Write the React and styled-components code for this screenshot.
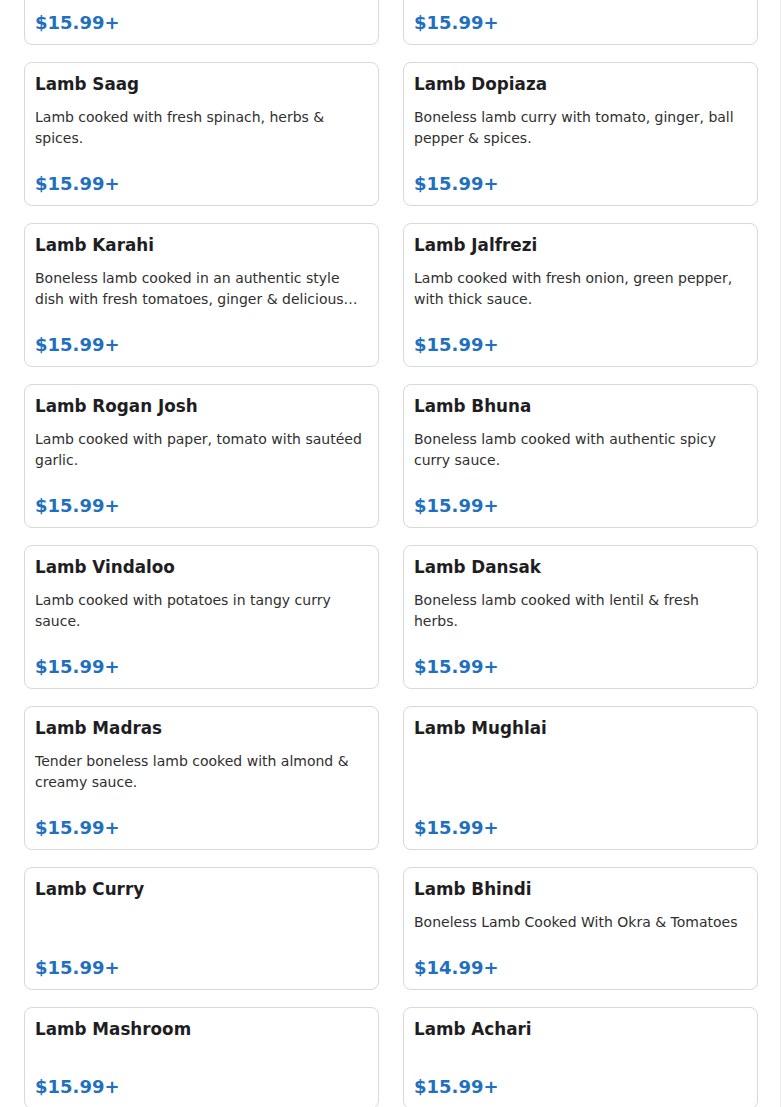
import React from "react";
import styled, { createGlobalStyle } from "styled-components";

const items = [
  { name: "Lamb Korma", desc: "Boneless lamb cooked with cream, cashew & mild spices.", price: "$15.99+" },
  { name: "Lamb Tikka Masala", desc: "Tender lamb cooked in a creamy tomato sauce.", price: "$15.99+" },
  { name: "Lamb Saag", desc: "Lamb cooked with fresh spinach, herbs & spices.", price: "$15.99+" },
  { name: "Lamb Dopiaza", desc: "Boneless lamb curry with tomato, ginger, ball pepper & spices.", price: "$15.99+" },
  { name: "Lamb Karahi", desc: "Boneless lamb cooked in an authentic style dish with fresh tomatoes, ginger & delicious spices.", price: "$15.99+" },
  { name: "Lamb Jalfrezi", desc: "Lamb cooked with fresh onion, green pepper, with thick sauce.", price: "$15.99+" },
  { name: "Lamb Rogan Josh", desc: "Lamb cooked with paper, tomato with sautéed garlic.", price: "$15.99+" },
  { name: "Lamb Bhuna", desc: "Boneless lamb cooked with authentic spicy curry sauce.", price: "$15.99+" },
  { name: "Lamb Vindaloo", desc: "Lamb cooked with potatoes in tangy curry sauce.", price: "$15.99+" },
  { name: "Lamb Dansak", desc: "Boneless lamb cooked with lentil & fresh herbs.", price: "$15.99+" },
  { name: "Lamb Madras", desc: "Tender boneless lamb cooked with almond & creamy sauce.", price: "$15.99+" },
  { name: "Lamb Mughlai", desc: "", price: "$15.99+" },
  { name: "Lamb Curry", desc: "", price: "$15.99+" },
  { name: "Lamb Bhindi", desc: "Boneless Lamb Cooked With Okra & Tomatoes", price: "$14.99+" },
  { name: "Lamb Mashroom", desc: "", price: "$15.99+" },
  { name: "Lamb Achari", desc: "", price: "$15.99+" },
];

const App = () => {
  return (
    <>
      <GlobalStyle />
      <Page>
        <MenuGrid>
          {items.map((item) => (
            <Card key={item.name}>
              <Title>{item.name}</Title>
              {item.desc ? <Desc>{item.desc}</Desc> : <Spacer />}
              <Price>{item.price}</Price>
            </Card>
          ))}
        </MenuGrid>
      </Page>
    </>
  );
};

const GlobalStyle = createGlobalStyle`
  html, body {
    margin: 0;
    padding: 0;
    background: #fff;
    overflow: hidden;
  }
  body {
    font-family: "DejaVu Sans", Verdana, sans-serif;
  }
`;

const Page = styled.div`
  width: 781px;
  box-sizing: border-box;
  padding: 0 22px 0 24px;
  border-right: 1px solid #eeeeee;
  min-height: 1107px;
  margin-top: -99px;
`;

const MenuGrid = styled.div`
  display: grid;
  grid-template-columns: 1fr 1fr;
  column-gap: 24px;
  row-gap: 17px;
`;

const Card = styled.div`
  display: flex;
  flex-direction: column;
  border: 1px solid #d9d9d9;
  border-radius: 8px;
  padding: 11px 10px 11px;
  background: #fff;
  min-width: 0;
`;

const Title = styled.h3`
  margin: 0;
  font-size: 16.8px;
  line-height: 21px;
  font-weight: 700;
  color: #1e1e22;
`;

const Desc = styled.p`
  margin: 12px 0 24px;
  font-size: 14px;
  line-height: 21px;
  color: #2f2f2f;
  display: -webkit-box;
  -webkit-line-clamp: 2;
  -webkit-box-orient: vertical;
  overflow: hidden;
`;

const Spacer = styled.div`
  height: 36px;
`;

const Price = styled.div`
  margin-top: auto;
  font-size: 18px;
  line-height: 21px;
  font-weight: 700;
  color: #1f70bf;
`;

export default App;
